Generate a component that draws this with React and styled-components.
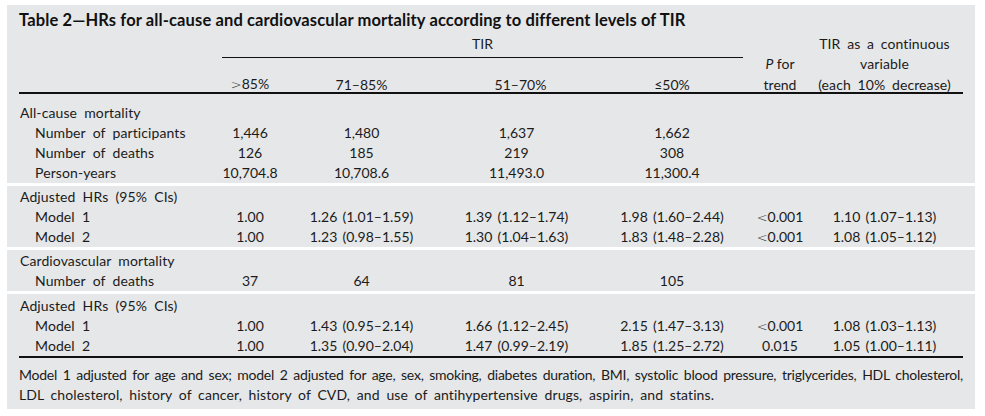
import { createGlobalStyle } from "styled-components";
import styled from "styled-components";

const GlobalStyle = createGlobalStyle`
  body {
    margin: 0;
    background: #ffffff;
    font-family: "Lato", "Liberation Sans", sans-serif;
    color: #1b1b1b;
  }
`;

// column centres, expressed as a padding shift inside each grid track
const shifts = [0, -14, -11, 0, 12, 9, -5];

const blocks = [
  {
    pad: "1px 12px 0",
    rows: [
      { label: "Adjusted HRs (95% CIs)", head: true },
      {
        label: "Model 1",
        cells: ["1.00", "1.26 (1.01–1.59)", "1.39 (1.12–1.74)", "1.98 (1.60–2.44)", "<0.001", "1.10 (1.07–1.13)"],
      },
      {
        label: "Model 2",
        cells: ["1.00", "1.23 (0.98–1.55)", "1.30 (1.04–1.63)", "1.83 (1.48–2.28)", "<0.001", "1.08 (1.05–1.12)"],
      },
    ],
  },
  {
    pad: "1px 12px 0",
    rows: [
      { label: "Cardiovascular mortality", head: true },
      { label: "Number of deaths", cells: ["37", "64", "81", "105"] },
    ],
  },
];

const allCauseRows = [
  { label: "All-cause mortality", head: true },
  { label: "Number of participants", cells: ["1,446", "1,480", "1,637", "1,662"] },
  { label: "Number of deaths", cells: ["126", "185", "219", "308"] },
  { label: "Person-years", cells: ["10,704.8", "10,708.6", "11,493.0", "11,300.4"] },
];

const lastRows = [
  { label: "Adjusted HRs (95% CIs)", head: true },
  {
    label: "Model 1",
    cells: ["1.00", "1.43 (0.95–2.14)", "1.66 (1.12–2.45)", "2.15 (1.47–3.13)", "<0.001", "1.08 (1.03–1.13)"],
  },
  {
    label: "Model 2",
    cells: ["1.00", "1.35 (0.90–2.04)", "1.47 (0.99–2.19)", "1.85 (1.25–2.72)", "0.015", "1.05 (1.00–1.11)"],
  },
];

function renderValue(v) {
  if (v.startsWith("<")) {
    return (
      <>
        <Sym>&lt;</Sym>
        {v.slice(1)}
      </>
    );
  }
  return v;
}

function DataRows({ rows }) {
  return rows.map((r, i) => (
    <Row key={i}>
      <Label $indent={!r.head}>{r.label}</Label>
      {(r.cells || []).map((c, j) => (
        <Cell key={j} $shift={shifts[j + 1]}>
          {renderValue(c)}
        </Cell>
      ))}
    </Row>
  ));
}

export default function App() {
  return (
    <Page>
      <GlobalStyle />
      <Panel>
        <Block $pad="5px 12px 0">
          <Title>Table 2—HRs for all-cause and cardiovascular mortality according to different levels of TIR</Title>
          <Header>
            <TirCell>TIR</TirCell>
            <HeadCell $col={2} $shift={shifts[1]}>
              <Sym>&gt;</Sym>85%
            </HeadCell>
            <HeadCell $col={3} $shift={shifts[2]}>71–85%</HeadCell>
            <HeadCell $col={4} $shift={shifts[3] + 4}>51–70%</HeadCell>
            <HeadCell $col={5} $shift={shifts[4]}>≤50%</HeadCell>
            <HeadCell $col={6} $shift={shifts[5]} $span>
              <i>P</i> for
              <br />
              trend
            </HeadCell>
            <HeadCell $col={7} $shift={shifts[6]} $span $words>
              TIR as a continuous
              <br />
              variable
              <br />
              (each 10% decrease)
            </HeadCell>
          </Header>
          <Body $top="9px">
            <DataRows rows={allCauseRows} />
          </Body>
        </Block>
        {blocks.map((b, i) => (
          <Block key={i} $pad={b.pad}>
            <DataRows rows={b.rows} />
          </Block>
        ))}
        <Block $pad="2px 12px 4px">
          <Body $rule>
            <DataRows rows={lastRows} />
          </Body>
          <Footnote>
            <Line $tight>
              Model 1 adjusted for age and sex; model 2 adjusted for age, sex, smoking, diabetes duration, BMI, systolic blood pressure, triglycerides, HDL cholesterol,
            </Line>
            <Line>
              LDL cholesterol, history of cancer, history of CVD, and use of antihypertensive drugs, aspirin, and statins.
            </Line>
          </Footnote>
        </Block>
      </Panel>
    </Page>
  );
}

// STYLED COMPONENTS

const cols = "203px 84px 133px 155px 132px 90px 147px";

const Page = styled.div`
  padding: 5px 10px 7px 7px;
  width: 968px;
`;

const Panel = styled.div`
  display: flex;
  flex-direction: column;
  gap: 3px;
  background: #ffffff;
`;

const Block = styled.section`
  background: #e6e7e8;
  padding: ${(p) => p.$pad};
`;

const Title = styled.h2`
  margin: 0;
  font-size: 16.5px;
  font-weight: 700;
  line-height: 20px;
  letter-spacing: 0.12px;
  color: #111;
`;

const Header = styled.div`
  margin-top: 4px;
  display: grid;
  grid-template-columns: ${cols};
  grid-template-rows: 24px 34px;
  border-bottom: 2px solid #111;
  font-size: 14px;
  line-height: 20.5px;
`;

const TirCell = styled.div`
  grid-column: 2 / 6;
  grid-row: 1;
  margin-right: -17px;
  text-align: center;
  line-height: 20px;
  border-bottom: 1px solid #111;
  padding-bottom: 3px;
  box-sizing: border-box;
  height: 24px;
`;

const HeadCell = styled.div`
  grid-column: ${(p) => p.$col};
  grid-row: ${(p) => (p.$span ? "1 / 3" : "2")};
  align-self: end;
  margin-bottom: -3px;
  text-align: center;
  white-space: nowrap;
  word-spacing: ${(p) => (p.$words ? "3px" : "0")};
  letter-spacing: ${(p) => (p.$words ? "0.1px" : "0")};
  padding-left: ${(p) => (p.$shift > 0 ? p.$shift * 2 : 0)}px;
  padding-right: ${(p) => (p.$shift < 0 ? -p.$shift * 2 : 0)}px;
`;

const Body = styled.div`
  padding-top: ${(p) => p.$top || "0"};
  border-bottom: ${(p) => (p.$rule ? "2px solid #111" : "none")};
`;

const Row = styled.div`
  display: grid;
  grid-template-columns: ${cols};
  height: 20px;
  font-size: 14px;
  line-height: 20px;
`;

const Label = styled.div`
  padding-left: ${(p) => (p.$indent ? "16px" : "1px")};
  white-space: nowrap;
  word-spacing: 3.5px;
  letter-spacing: 0.1px;
`;

const Cell = styled.div`
  text-align: center;
  white-space: nowrap;
  word-spacing: 1.5px;
  padding-left: ${(p) => (p.$shift > 0 ? p.$shift * 2 : 0)}px;
  padding-right: ${(p) => (p.$shift < 0 ? -p.$shift * 2 : 0)}px;
`;

const Sym = styled.span`
  font-family: "DejaVu Sans", sans-serif;
  font-weight: 300;
  font-size: 13px;
  color: #333;
`;

const Footnote = styled.div`
  margin-top: 7px;
  font-size: 14px;
  line-height: 20px;
`;

const Line = styled.div`
  white-space: nowrap;
  text-align: ${(p) => (p.$tight ? "justify" : "left")};
  text-align-last: ${(p) => (p.$tight ? "justify" : "left")};
  letter-spacing: ${(p) => (p.$tight ? "-0.25px" : "0.1px")};
  word-spacing: ${(p) => (p.$tight ? "-2px" : "3px")};
`;
